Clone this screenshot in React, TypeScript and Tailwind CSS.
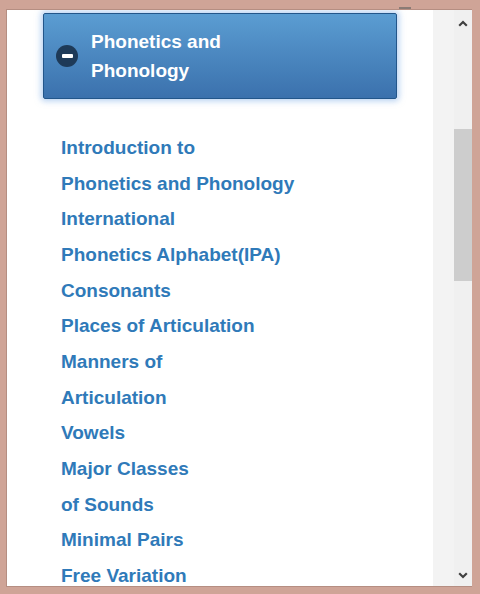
import React from "react"

const links = [
  "Introduction to",
  "Phonetics and Phonology",
  "International",
  "Phonetics Alphabet(IPA)",
  "Consonants",
  "Places of Articulation",
  "Manners of",
  "Articulation",
  "Vowels",
  "Major Classes",
  "of Sounds",
  "Minimal Pairs",
  "Free Variation",
]

const App = () => {
  return (
    <div className="w-[480px] h-[594px] bg-[#cfa497] pt-[9px] pl-[6px] pr-[8px] pb-[7px] font-['Liberation_Sans',Arial,sans-serif] overflow-hidden">
      <div className="relative flex h-full border-t border-l border-b border-[#b58e82] bg-white">
        <div className="absolute left-[392px] -top-[3px] w-[12px] h-[2px] bg-[#8a7b75]" />
        <div className="flex-1 overflow-hidden">
          <div className="ml-[36px] mt-[3px] w-[354px] h-[86px] flex items-center rounded-[2px] border border-[#23568a] bg-gradient-to-b from-[#5b9dd2] to-[#3b71ad] shadow-[0_0_6px_2px_rgba(120,170,230,0.55)]">
            <div className="ml-[12px] w-[22px] h-[22px] rounded-full bg-[#1e3a58] flex items-center justify-center">
              <div className="w-[11px] h-[4px] bg-white rounded-[1px]" />
            </div>
            <div className="ml-[13px] text-white font-bold text-[19px] leading-[29px]">
              Phonetics and
              <br />
              Phonology
            </div>
          </div>
          <ul className="ml-[54px] mt-[31px] text-[#2f7ab9] font-bold text-[19px] leading-[35.66px]">
            {links.map((l) => (
              <li key={l}>{l}</li>
            ))}
          </ul>
        </div>
        <div className="w-[21px] bg-[#f3f3f3]" />
        <div className="w-[18px] bg-[#f0f0f0] flex flex-col items-center">
          <div className="h-[26px] flex items-center justify-center text-[#404040]">
            <svg width="10" height="7" viewBox="0 0 10 7">
              <path d="M1.2 5.8 L5 2 L8.8 5.8" stroke="currentColor" strokeWidth="2.2" fill="none" />
            </svg>
          </div>
          <div className="mt-[93px] w-[18px] h-[152px] bg-[#cdcdcd]" />
          <div className="flex-1" />
          <div className="h-[22px] flex items-center justify-center text-[#404040]">
            <svg width="10" height="7" viewBox="0 0 10 7">
              <path d="M1.2 1.2 L5 5 L8.8 1.2" stroke="currentColor" strokeWidth="2.2" fill="none" />
            </svg>
          </div>
        </div>
      </div>
    </div>
  )
}

export default App
